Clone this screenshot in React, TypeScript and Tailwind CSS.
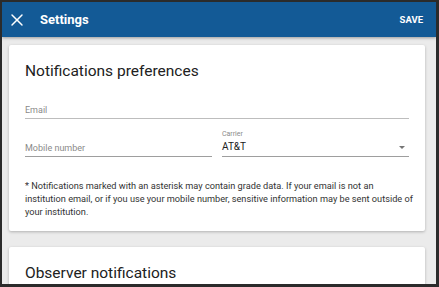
import { X } from "lucide-react";

const App = () => {
  return (
    <div className="w-[439px] h-[287px] overflow-hidden bg-[#2b2b2b] pt-[2px] pl-[2px] pr-[3px] pb-[3px] font-['Roboto',sans-serif]">
      <div className="h-full flex flex-col bg-[#ebebeb] overflow-hidden">
        {/* Header */}
        <header className="h-[35px] shrink-0 bg-[#135a96] flex items-center pl-[5px] pr-[13px] shadow-[0_1px_3px_rgba(0,0,0,0.35)] relative z-10">
          <X className="w-[20px] h-[20px] text-white" strokeWidth={1.75} />
          <span className="ml-[13px] text-white text-[13px] font-bold leading-[16px]">Settings</span>
          <span className="ml-auto text-white text-[9.5px] font-bold leading-[12px]">SAVE</span>
        </header>

        <div className="flex-1 pl-[7px] pt-[8px] flex flex-col gap-[16px]">
          {/* Notifications card */}
          <section className="bg-white w-[416px] rounded-[2px] shadow-[0_1px_3px_rgba(0,0,0,0.25)] px-[16px] pt-[16px] pb-[13px]">
            <h2 className="text-[15.5px] text-[#212121] leading-[20px]">Notifications preferences</h2>
            <div className="mt-[23px] border-b border-[#bdbdbd] pb-[2px]">
              <div className="text-[9px] text-[#8a8a8a] leading-[12px]">Email</div>
            </div>
            <div className="flex items-end gap-[10px]">
              <div className="flex-1 border-b border-[#9e9e9e] pb-[2px]">
                <div className="text-[9px] text-[#8a8a8a] leading-[12px]">Mobile number</div>
              </div>
              <div className="flex-1 border-b border-[#9e9e9e] pb-[3px] pt-[11px]">
                <div className="text-[7px] text-[#8a8a8a] leading-[9px]">Carrier</div>
                <div className="flex items-center mt-[2px]">
                  <span className="text-[10px] text-[#212121] leading-[12px]">AT&amp;T</span>
                  <svg className="ml-auto mr-[4px]" width="6" height="3" viewBox="0 0 6 3">
                    <path d="M0 0 L6 0 L3 3 Z" fill="#757575" />
                  </svg>
                </div>
              </div>
            </div>
            <p className="mt-[22px] text-[9.2px] leading-[13px] text-[#333333] whitespace-nowrap">
              * Notifications marked with an asterisk may contain grade data. If your email is not an
              <br />
              institution email, or if you use your mobile number, sensitive information may be sent outside of
              <br />
              your institution.
            </p>
          </section>

          {/* Observer card */}
          <section className="bg-white w-[416px] rounded-[2px] shadow-[0_1px_3px_rgba(0,0,0,0.25)] px-[16px] pt-[16px] h-[80px] shrink-0">
            <h2 className="text-[15.5px] text-[#212121] leading-[20px]">Observer notifications</h2>
          </section>
        </div>
      </div>
    </div>
  );
};

export default App;
